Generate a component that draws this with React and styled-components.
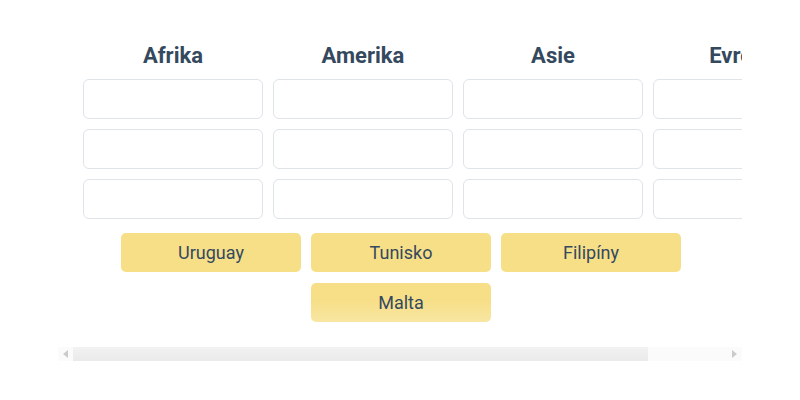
import React from "react";
import styled, { createGlobalStyle, css } from "styled-components";

const Global = createGlobalStyle`
  html, body { margin: 0; padding: 0; background: #fff; }
  body { font-family: Roboto, "Liberation Sans", sans-serif; }
`;

const Frame = styled.div`
  width: 684px;
  margin: 35px auto 0;
`;

const Viewport = styled.div`
  overflow: hidden;
`;

const Table = styled.div`
  display: grid;
  grid-template-columns: repeat(4, 180px);
  column-gap: 10px;
  row-gap: 10px;
  width: max-content;
  padding: 0 3px 0 25px;
`;

const Heading = styled.div`
  height: 40px;
  line-height: 42px;
  margin-bottom: -6px;
  text-align: center;
  font-size: 22px;
  font-weight: 700;
  color: #34495e;
`;

const Slot = styled.div`
  height: 38px;
  background: #fff;
  border: 1px solid #dfe4e8;
  border-radius: 6px;
`;

const Pool = styled.div`
  display: flex;
  flex-wrap: wrap;
  justify-content: center;
  column-gap: 10px;
  row-gap: 11px;
  margin-top: 14px;
  padding: 0 0 25px 2px;
`;

const Chip = styled.div`
  width: 180px;
  height: 39px;
  display: flex;
  align-items: center;
  justify-content: center;
  background: #f7df88;
  border-radius: 5px;
  color: #34495e;
  font-size: 18px;
  ${(p) =>
    p.$fading &&
    css`
      background: linear-gradient(to bottom, #f7df87 0%, #f7df88 45%, #f8e6a2 100%);
    `}
`;

const ScrollBar = styled.div`
  display: flex;
  height: 14px;
  background: #fbfbfb;
`;

const ScrollButton = styled.div`
  flex: 0 0 15px;
  display: flex;
  align-items: center;
  justify-content: center;
`;

const ScrollTrack = styled.div`
  flex: 1;
  display: flex;
  align-items: stretch;
`;

const ScrollThumb = styled.div`
  background: linear-gradient(to bottom, #f2f2f2, #eaeaea);
`;

const Arrow = ({ dir }) => (
  <svg width="5" height="8" viewBox="0 0 5 8">
    <polygon
      points={dir === "left" ? "0,4 5,0 5,8" : "5,4 0,0 0,8"}
      fill="#cbcbcb"
    />
  </svg>
);

const columns = ["Afrika", "Amerika", "Asie", "Evropa"];
const items = ["Uruguay", "Tunisko", "Filipíny", "Malta"];

export default function App() {
  const thumbRatio = 684 / 778;
  return (
    <>
      <Global />
      <Frame>
        <Viewport>
          <Table>
            {columns.map((c) => (
              <Heading key={c}>{c}</Heading>
            ))}
            {Array.from({ length: 12 }).map((_, i) => (
              <Slot key={i} />
            ))}
          </Table>
          <Pool>
            {items.map((t, i) => (
              <Chip key={t} $fading={i === 3}>
                {t}
              </Chip>
            ))}
          </Pool>
        </Viewport>
        <ScrollBar>
          <ScrollButton>
            <Arrow dir="left" />
          </ScrollButton>
          <ScrollTrack>
            <ScrollThumb style={{ width: `${thumbRatio * 100}%` }} />
          </ScrollTrack>
          <ScrollButton>
            <Arrow dir="right" />
          </ScrollButton>
        </ScrollBar>
      </Frame>
    </>
  );
}
